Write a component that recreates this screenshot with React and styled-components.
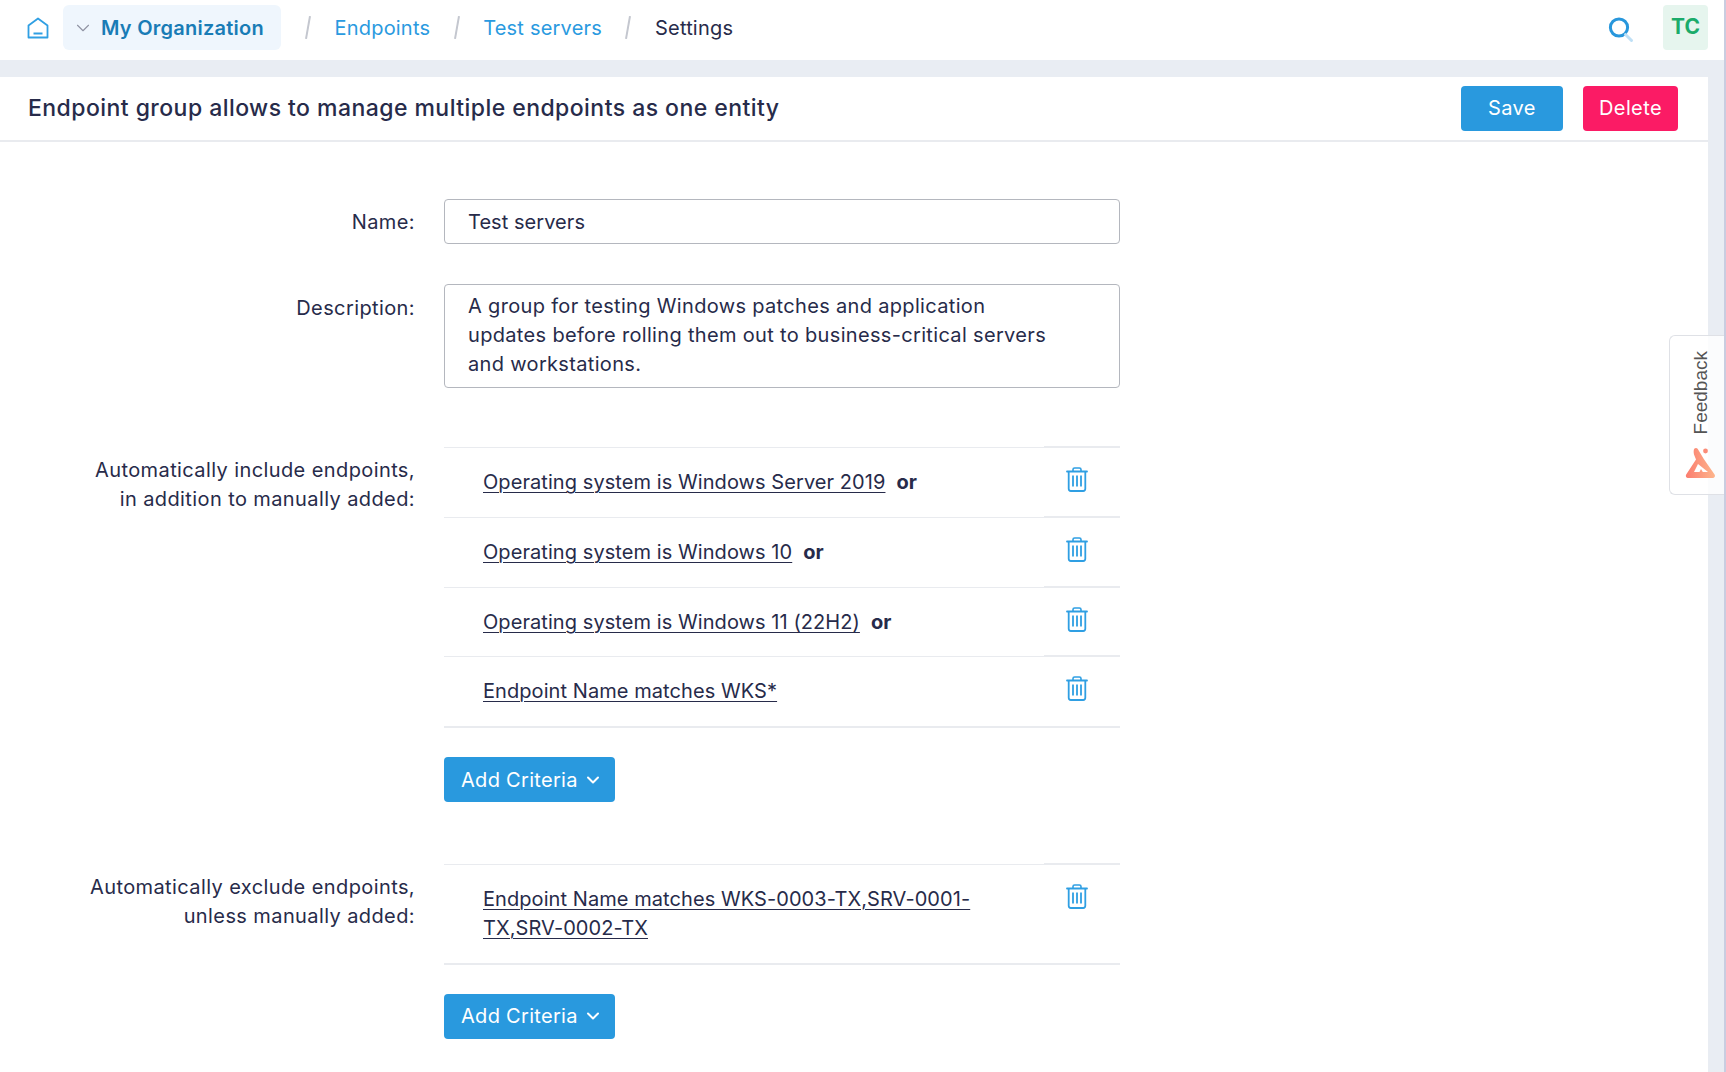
import React from "react";
import styled, { createGlobalStyle } from "styled-components";
import { ChevronDown } from "lucide-react";

const GlobalStyle = createGlobalStyle`
  html, body {
    margin: 0;
    padding: 0;
    height: 100%;
    overflow: hidden;
    background: #fff;
    font-family: Inter, "Noto Sans", sans-serif;
    color: #272b4a;
  }
  * { box-sizing: border-box; }
`;

//icons
const HomeIcon = () => (
  <svg width="22" height="22" viewBox="0 0 22 22" fill="none">
    <path d="M1.5 20.5V8.5L11 1.5l9.5 7v12z" stroke="#2f9fe3" strokeWidth="1.8" strokeLinejoin="round" />
    <path d="M6.5 16.5h9" stroke="#2f9fe3" strokeWidth="2" />
  </svg>
);

const SearchIcon = () => (
  <svg width="26" height="26" viewBox="0 0 26 26" fill="none">
    <circle cx="11" cy="10.5" r="8.6" stroke="#2897dc" strokeWidth="3" />
    <path d="M17.5 17.5l6 6" stroke="#bfe0f6" strokeWidth="3" strokeLinecap="round" />
  </svg>
);

const TrashIcon = () => (
  <svg width="22" height="25" viewBox="0 0 22 25" fill="none" stroke="#2f9fe3">
    <path d="M1 4.5h20" strokeWidth="1.8" strokeLinecap="round" />
    <path d="M7 4.5V2.6C7 1.7 7.7 1 8.6 1h4.8c.9 0 1.6.7 1.6 1.6v1.9" strokeWidth="1.6" />
    <path d="M2.7 4.5v17.3c0 1.2 1 2.2 2.2 2.2h12.2c1.2 0 2.2-1 2.2-2.2V4.5" strokeWidth="1.8" />
    <path d="M7 8.5v11M11 8.5v11M15 8.5v11" strokeWidth="1.8" />
  </svg>
);

const FeedbackLogo = () => (
  <svg width="32" height="32" viewBox="0 0 32 32">
    <defs>
      <linearGradient id="fb" x1="0" y1="0" x2="1" y2="0">
        <stop offset="0" stopColor="#fb7d6f" />
        <stop offset="1" stopColor="#fdb58c" />
      </linearGradient>
    </defs>
    <path
      fill="url(#fb)"
      fillRule="evenodd"
      d="M9.5 1.5c1-1 2.6-.7 3.3.5l6 10 10.8 15.5c1 1.500 0 3.500-1.800 3.500H3c-1.800 0-2.800-2-1.800-3.500L11 12.500 9 7.500C8.500 5 8.500 2.500 9.500 1.500zM13 17l-4 8h5.500L16 22l1.800 3H23z"
    />
    <circle cx="20.500" cy="4" r="2.400" fill="#fb8c78" />
  </svg>
);

//data
const includeRules = [
  { text: "Operating system is Windows Server 2019", or: true },
  { text: "Operating system is Windows 10", or: true },
  { text: "Operating system is Windows 11 (22H2)", or: true },
  { text: "Endpoint Name matches WKS*" },
];

const excludeRules = [
  { text: "Endpoint Name matches WKS-0003-TX,SRV-0001-TX,SRV-0002-TX" },
];

const description =
  "A group for testing Windows patches and application\nupdates before rolling them out to business-critical servers\nand workstations.";

const CriteriaList = ({ rules }) => (
  <>
    <List>
      {rules.map((rule) => (
        <Rule key={rule.text}>
          <RuleText>
            <RuleLink>{rule.text}</RuleLink>
            {rule.or && <Or>or</Or>}
          </RuleText>
          <RuleDelete>
            <TrashIcon />
          </RuleDelete>
        </Rule>
      ))}
    </List>
    <AddButton>
      Add Criteria
      <ChevronDown size={20} strokeWidth={2.4} />
    </AddButton>
  </>
);

const App = () => {
  return (
    <Page>
      <GlobalStyle />
      <TopBar>
        <HomeLink>
          <HomeIcon />
        </HomeLink>
        <OrgPill>
          <ChevronDown size={22} strokeWidth={1.2} color="#8f93a3" />
          <OrgName>My Organization</OrgName>
        </OrgPill>
        <Crumbs>
          <Slash />
          <Crumb>Endpoints</Crumb>
          <Slash />
          <Crumb>Test servers</Crumb>
          <Slash />
          <Crumb $current>Settings</Crumb>
        </Crumbs>
        <SearchButton>
          <SearchIcon />
        </SearchButton>
        <Avatar>TC</Avatar>
      </TopBar>

      <Main>
        <Panel>
          <PanelHeader>
            <Title>Endpoint group allows to manage multiple endpoints as one entity</Title>
            <Button>Save</Button>
            <Button $danger>Delete</Button>
          </PanelHeader>

          <Form>
            <FieldRow>
              <Label $top={9}>Name:</Label>
              <TextInput defaultValue="Test servers" />
            </FieldRow>
            <FieldRow $gap={59}>
              <Label $top={10}>Description:</Label>
              <TextArea defaultValue={description} />
            </FieldRow>
            <FieldRow $gap={62}>
              <Label $top={9}>
                Automatically include endpoints,
                <br />
                in addition to manually added:
              </Label>
              <div>
                <CriteriaList rules={includeRules} />
              </div>
            </FieldRow>
            <FieldRow>
              <Label $top={9}>
                Automatically exclude endpoints,
                <br />
                unless manually added:
              </Label>
              <div>
                <CriteriaList rules={excludeRules} />
              </div>
            </FieldRow>
          </Form>
        </Panel>
      </Main>

      <FeedbackTab>
        <FeedbackText>Feedback</FeedbackText>
        <FeedbackLogo />
      </FeedbackTab>
    </Page>
  );
};

const Page = styled.div`
  position: relative;
  height: 100vh;
  display: flex;
  flex-direction: column;
  overflow: hidden;
  border-right: 2px solid #c9cde0;
`;

const TopBar = styled.header`
  flex: none;
  height: 60px;
  display: flex;
  align-items: center;
  padding: 0 16px 5px 27px;
  background: #fff;
`;

const HomeLink = styled.div`
  display: flex;
  margin-right: 14px;
`;

const OrgPill = styled.div`
  display: flex;
  align-items: center;
  gap: 7px;
  width: 218px;
  height: 45px;
  padding-left: 9px;
  background: #eff6fd;
  border-radius: 6px;
`;

const OrgName = styled.span`
  font-size: 20px;
  font-weight: 600;
  letter-spacing: 0.25px;
  color: #197cb6;
`;

const Crumbs = styled.nav`
  flex: 1;
  display: flex;
  align-items: center;
  gap: 25.5px;
  margin-left: 26px;
`;

const Slash = styled.span`
  width: 2px;
  height: 23px;
  background: #c4c7cf;
  transform: rotate(10deg);
`;

const Crumb = styled.span`
  font-size: 20px;
  letter-spacing: 0.2px;
  color: ${(props) => (props.$current ? "#272b4a" : "#2a9ae0")};
`;

const SearchButton = styled.div`
  display: flex;
  margin-right: 29px;
  padding-top: 4px;
`;

const Avatar = styled.div`
  width: 45px;
  height: 45px;
  display: flex;
  align-items: center;
  justify-content: center;
  padding-bottom: 2px;
  background: #e6f5ee;
  border-radius: 4px;
  color: #1bab6a;
  font-size: 21px;
  font-weight: 700;
`;

const Main = styled.main`
  flex: 1;
  min-height: 0;
  padding: 17px 16px 0 0;
  background: #e9edf3;
`;

const Panel = styled.section`
  height: 100%;
  background: #fff;
`;

const PanelHeader = styled.div`
  height: 65px;
  display: flex;
  align-items: center;
  gap: 20px;
  padding: 0 30px 1px 28px;
  border-bottom: 2px solid #e9ebef;
`;

const Title = styled.h1`
  flex: 1;
  margin: 0;
  font-size: 23px;
  font-weight: 500;
  letter-spacing: 0.45px;
`;

const Button = styled.button`
  width: ${(props) => (props.$danger ? 95 : 102)}px;
  height: 45px;
  padding: 0;
  border: none;
  border-radius: 4px;
  background: ${(props) => (props.$danger ? "#fb1b65" : "#2999de")};
  color: #fff;
  font-family: inherit;
  font-size: 20px;
  letter-spacing: 0.4px;
`;

const Form = styled.div`
  padding-top: 57px;
`;

const FieldRow = styled.div`
  display: grid;
  grid-template-columns: 415px 676px;
  column-gap: 29px;
  margin-bottom: ${(props) => props.$gap ?? 40}px;
`;

const Label = styled.label`
  padding-top: ${(props) => props.$top}px;
  text-align: right;
  font-size: 20px;
  line-height: 29px;
  letter-spacing: 0.4px;
`;

const TextInput = styled.input`
  height: 45px;
  padding: 0 23px;
  border: 1px solid #b4b7be;
  border-radius: 4px;
  color: inherit;
  font-family: inherit;
  font-size: 20px;
  letter-spacing: 0.05px;
  outline: none;
`;

const TextArea = styled.textarea`
  display: block;
  width: 100%;
  height: 104px;
  padding: 7px 23px;
  border: 1px solid #b4b7be;
  border-radius: 4px;
  color: inherit;
  font-family: inherit;
  font-size: 20px;
  line-height: 29px;
  letter-spacing: 0.33px;
  resize: none;
  overflow: hidden;
  outline: none;
  white-space: pre;
`;

const List = styled.div`
  border-bottom: 2px solid #e9ebef;
`;

const Rule = styled.div`
  display: flex;
`;

const RuleText = styled.div`
  flex: 1;
  padding: 20px 50px 19.75px 39px;
  border-top: 1px solid #e9ebef;
  font-size: 20px;
  line-height: 29px;
  letter-spacing: 0.07px;
`;

const RuleLink = styled.span`
  text-decoration: underline;
  text-underline-offset: 3px;
  text-decoration-thickness: 1px;
`;

const Or = styled.b`
  margin-left: 11px;
  font-weight: 700;
`;

const RuleDelete = styled.div`
  flex: none;
  width: 76px;
  margin-top: -1px;
  padding: 19px 0 0 22px;
  border-top: 2px solid #e9ebef;
`;

const AddButton = styled.button`
  display: flex;
  align-items: center;
  justify-content: space-between;
  width: 171px;
  height: 45px;
  margin-top: 29px;
  padding: 0 12px 0 17px;
  border: none;
  border-radius: 4px;
  background: #2999de;
  color: #fff;
  font-family: inherit;
  font-size: 20px;
  letter-spacing: 0.3px;
`;

const FeedbackTab = styled.aside`
  position: absolute;
  top: 335px;
  right: -2px;
  width: 57px;
  height: 160px;
  display: flex;
  flex-direction: column;
  align-items: center;
  justify-content: flex-end;
  gap: 13px;
  padding: 0 1px 15px 6px;
  background: rgba(255, 255, 255, 0.8);
  border: 1px solid #dfe1e6;
  border-right: none;
  border-radius: 6px 0 0 6px;
`;

const FeedbackText = styled.span`
  writing-mode: vertical-rl;
  transform: rotate(180deg);
  font-family: "Liberation Sans", Arial, sans-serif;
  font-size: 19px;
  color: #555;
`;

export default App;
